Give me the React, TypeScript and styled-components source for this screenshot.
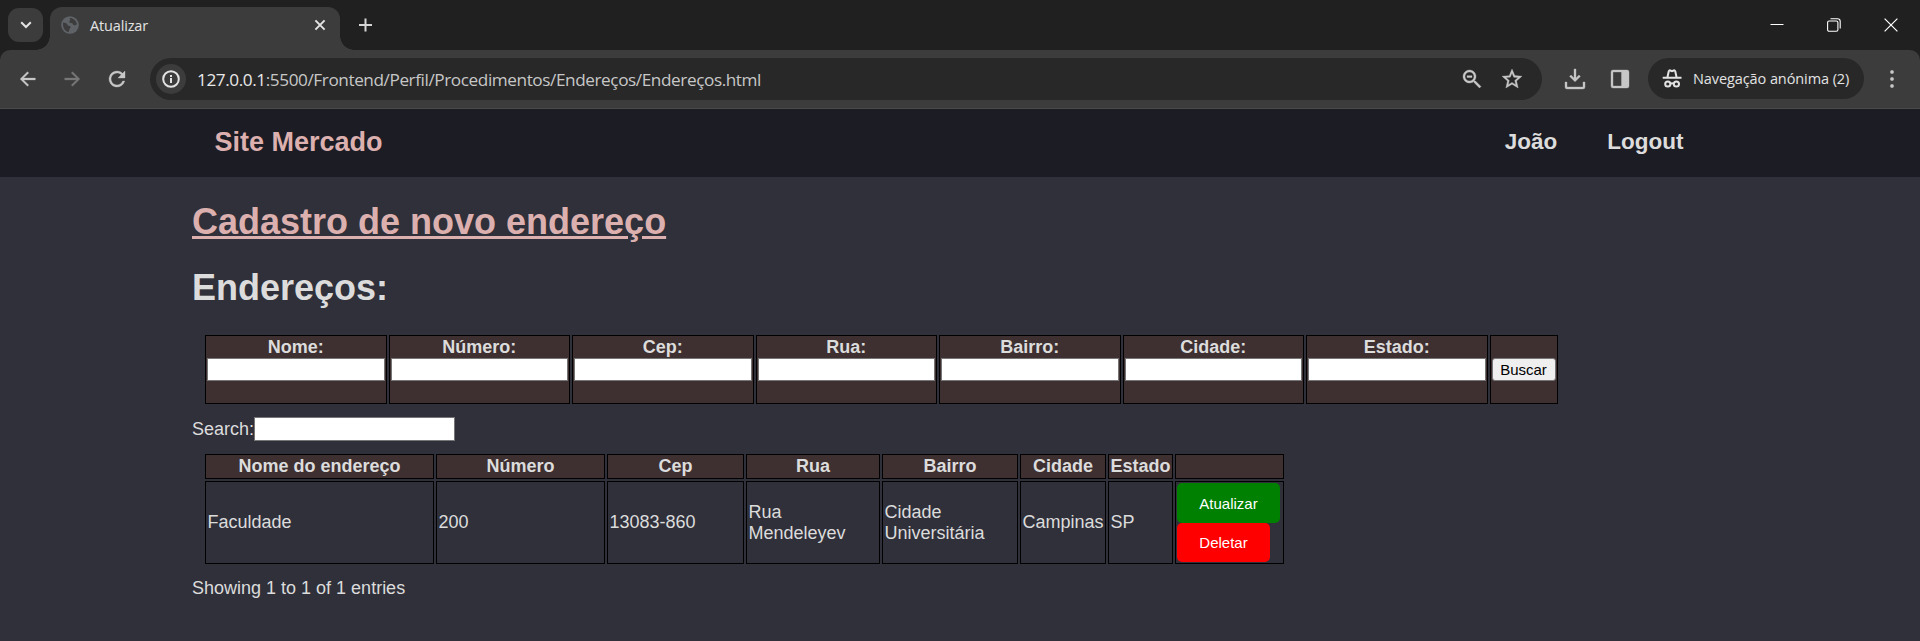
import React from 'react';
import styled, { createGlobalStyle, css } from 'styled-components';

const GlobalStyle = createGlobalStyle`
  * { box-sizing: border-box; }
  body { margin: 0; background: #30303a; overflow: hidden; }
`;

const Window = styled.div`
  width: 1920px;
  height: 641px;
  display: flex;
  flex-direction: column;
  background: #30303a;
  color: #dcdcdc;
  font: 18px/20px "Liberation Sans", Arial, sans-serif;
`;

const TabStrip = styled.div`
  height: 50px;
  flex: none;
  display: flex;
  align-items: center;
  background: #202020;
  padding-left: 8px;
`;

const TabSearch = styled.button`
  width: 35px;
  height: 34px;
  border: 0;
  padding: 0;
  border-radius: 11px;
  background: #3c3c3c;
  display: grid;
  place-items: center;
`;

const Tab = styled.div`
  position: relative;
  width: 290px;
  height: 43px;
  margin: 7px 0 0 7px;
  padding: 0 10px 7px 11px;
  border-radius: 12px 12px 0 0;
  background: #3c3c3c;
  display: flex;
  align-items: center;
  &::before, &::after {
    content: '';
    position: absolute;
    bottom: 0;
    width: 14px;
    height: 14px;
  }
  &::before { right: 100%; background: radial-gradient(circle at 0 0, transparent 13.5px, #3c3c3c 14px); }
  &::after { left: 100%; background: radial-gradient(circle at 100% 0, transparent 13.5px, #3c3c3c 14px); }
`;

const TabTitle = styled.span`
  flex: 1;
  margin-left: 11px;
  padding-top: 1px;
  color: #e3e3e3;
  font: 14.5px/20px "Open Sans", "Noto Sans", sans-serif;
  letter-spacing: -0.15px;
`;

const NewTab = styled.div`
  margin-left: 18px;
  display: flex;
`;

const WindowControls = styled.div`
  margin-left: auto;
  display: flex;
  gap: 43px;
  padding-right: 22px;
`;

const ToolbarBackdrop = styled.div`
  flex: none;
  background: #202020;
`;

const Toolbar = styled.div`
  height: 59px;
  padding-bottom: 1px;
  border-bottom: 1px solid #4a4a4a;
  border-radius: 10px 10px 0 0;
  background: #3c3c3c;
  display: flex;
  align-items: center;
`;

const NavIcons = styled.div`
  width: 150px;
  display: flex;
  align-items: center;
  gap: 22px;
  padding-left: 16.5px;
`;

const AddressBar = styled.div`
  width: 1392px;
  height: 42px;
  padding: 0 18px 0 6px;
  border-radius: 21px;
  background: #282828;
  display: flex;
  align-items: center;
`;

const SiteInfo = styled.div`
  width: 30px;
  height: 30px;
  border-radius: 50%;
  background: #3c3c3c;
  display: grid;
  place-items: center;
`;

const Url = styled.span`
  flex: 1;
  margin-left: 11px;
  padding-top: 2px;
  color: #c7c7c7;
  font: 17.2px/24px "Open Sans", "Noto Sans", sans-serif;
  letter-spacing: -0.42px;
  b { font-weight: 400; color: #e8e8e8; }
`;

const AddressActions = styled.div`
  display: flex;
  gap: 16px;
`;

const ToolbarActions = styled.div`
  display: flex;
  gap: 21px;
  margin: 0 16px 0 21px;
`;

const IncognitoChip = styled.div`
  width: 216px;
  height: 41px;
  padding-left: 12px;
  border-radius: 21px;
  background: #282828;
  display: flex;
  align-items: center;
  gap: 9px;
  color: #e3e3e3;
  font: 14.5px/20px "Open Sans", "Noto Sans", sans-serif;
  letter-spacing: -0.09px;
  white-space: nowrap;
`;

const MenuDots = styled.div`
  margin-left: 16px;
  display: flex;
`;

const SiteHeader = styled.header`
  height: 68px;
  flex: none;
  padding: 0 236.5px 0 214.5px;
  background: #1c1c24;
  display: flex;
  align-items: center;
  justify-content: space-between;
  font-weight: 700;
`;

const Brand = styled.div`
  color: #dcb0ae;
  font-size: 27px;
  line-height: 32px;
  padding-bottom: 3px;
`;

const SiteNav = styled.nav`
  display: flex;
  gap: 50px;
  font-size: 22.5px;
  line-height: 26px;
  padding-bottom: 2px;
`;

const Page = styled.main`
  padding: 24px 192px 0;
`;

const Heading = styled.h1<{ $link?: boolean }>`
  margin: 0 0 24px;
  font-size: 36px;
  line-height: 42px;
  ${p => p.$link && css`color: #dcb0ae; text-decoration: underline;`}
`;

const Cell = styled.div<{ $head?: boolean; $actions?: boolean }>`
  border: 1px solid #000;
  padding: 1px 1px 1px ${p => (p.$actions ? '1px' : '1.5px')};
  display: flex;
  flex-direction: column;
  justify-content: center;
  ${p => p.$head && css`padding: 1px; background: #3e3031; font-weight: 700; text-align: center;`}
`;

const SearchTable = styled.div`
  display: grid;
  grid-template-columns: repeat(7, 181.5px) 68px;
  gap: 2px;
  height: 69px;
  margin: 26px 0 0 13px;
  ${Cell} { justify-content: flex-start; }
`;

const FieldLabel = styled.label`
  height: 21px;
  line-height: 20px;
`;

const Field = styled.input<{ $width?: string }>`
  width: ${p => p.$width || '100%'};
  height: ${p => p.$width ? '24px' : '23px'};
  border: 1px solid #767676;
  background: #fff;
  padding: 0 2px;
`;

const SubmitButton = styled.button`
  height: 23px;
  border: 1px solid #767676;
  border-radius: 3px;
  background: #efefef;
  color: #000;
  padding: 0;
  font: 15px/17px "Liberation Sans", Arial, sans-serif;
`;

const SearchRow = styled.div`
  display: flex;
  align-items: center;
  height: 24px;
  margin: 13px 0;
`;

const ResultTable = styled.div`
  display: grid;
  grid-template-columns: 229px 169px 137px 134px 136px 86px 65px 109px;
  grid-template-rows: 25px 83px;
  gap: 2px;
  margin-left: 13px;
  line-height: 21px;
`;

const ActionButton = styled.button<{ $color: string; $width: number; $height: number }>`
  width: ${p => p.$width}px;
  height: ${p => p.$height}px;
  flex: none;
  border: 0;
  border-radius: 5px;
  background: ${p => p.$color};
  color: #fff;
  padding: 0;
  font: 15px/17px "Liberation Sans", Arial, sans-serif;
`;

const Summary = styled.div`
  margin-top: 14px;
`;

interface IconProps { size?: number; color?: string; children: React.ReactNode; }
const Icon = ({ size = 24, color = '#c7c7c7', children }: IconProps) => (
  <svg width={size} height={size} viewBox="0 0 24 24" fill={color} stroke={color} strokeWidth=".35">{children}</svg>
);

const fields = ['Nome:', 'Número:', 'Cep:', 'Rua:', 'Bairro:', 'Cidade:', 'Estado:'];
const columns = ['Nome do endereço', 'Número', 'Cep', 'Rua', 'Bairro', 'Cidade', 'Estado', ''];
const address = ['Faculdade', '200', '13083-860', 'Rua Mendeleyev', 'Cidade Universitária', 'Campinas', 'SP'];

export default function App() {
  return (
    <Window>
      <GlobalStyle />
      <TabStrip>
        <TabSearch>
          <svg width="12" height="8" viewBox="0 0 12 8" fill="none" stroke="#e3e3e3" strokeWidth="2"><path d="M1.2 1.2 6 6l4.8-4.8" /></svg>
        </TabSearch>
        <Tab>
          <svg width="18" height="18" viewBox="0 0 18 18">
            <circle cx="9" cy="9" r="8.8" fill="#5f6368" />
            <path d="M2 6.5c1 .2 3 .3 4 1.2s0 1.8 1.5 2 2.5 .4 2 1.8-1.5 1.5-1.5 4.5C4 15.5 1.7 12.5 2 6.5zM8.500 2c3-.4 6.5 2 7.4 6-.8 1.5-1.9 1.5-3.4 1-1-.5-.6-1.7-2-1.9S8 7 8.300 5.600 10 4.500 8.500 2z" fill="#3c3c3c" />
          </svg>
          <TabTitle>Atualizar</TabTitle>
          <svg width="20" height="20" viewBox="0 0 20 20" stroke="#e3e3e3" strokeWidth="2"><path d="m5.4 5.4 9.2 9.2m0-9.2-9.2 9.2" /></svg>
        </Tab>
        <NewTab>
          <svg width="15" height="14" viewBox="0 0 15 14" stroke="#d5d5d5" strokeWidth="2"><path d="M1 7h13M7.5 .5v13" /></svg>
        </NewTab>
        <WindowControls>
          <svg width="14" height="14" viewBox="0 0 14 14" stroke="#fff"><path d="M.5 6.5h13" /></svg>
          <svg width="14" height="14" viewBox="0 0 14 14" fill="none" stroke="#fff" strokeWidth="1.1"><rect x=".6" y="3" width="10.3" height="10.3" rx="1.5" /><path d="M3.5.8h7q2.7 0 2.7 2.7v7" /></svg>
          <svg width="14" height="14" viewBox="0 0 14 14" stroke="#fff" strokeWidth="1.2"><path d="m.6.6 12.800 12.800m0-12.800L.6 13.400" /></svg>
        </WindowControls>
      </TabStrip>
      <ToolbarBackdrop>
        <Toolbar>
          <NavIcons>
            <Icon size={22}><path d="M20 11H7.200l5.600-5.600L11.400 4l-8 8 8 8 1.400-1.400L7.200 13H20z" /></Icon>
            <Icon size={22} color="#777"><path d="M4 11h12.800l-5.600-5.600L12.600 4l8 8-8 8-1.400-1.400 5.600-5.600H4z" /></Icon>
            <Icon><path d="M17.650 6.350A7.950 7.950 0 0 0 12 4a8 8 0 1 0 7.730 10h-2.080A6 6 0 1 1 12 6c1.660 0 3.140.69 4.220 1.780L13 11h7V4z" /></Icon>
          </NavIcons>
          <AddressBar>
            <SiteInfo>
              <svg width="18" height="18" viewBox="0 0 18 18" fill="none" stroke="#e3e3e3" strokeWidth="2"><circle cx="9" cy="9" r="7.8" /><path d="M9 8v5M9 5v2" /></svg>
            </SiteInfo>
            <Url><b>127.0.0.1</b>:5500/Frontend/Perfil/Procedimentos/Endereços/Endereços.html</Url>
            <AddressActions>
              <Icon><path d="M15.500 14h-.79l-.28-.27A6.500 6.500 0 1 0 13.730 14.430l.27.28v.79l5.500 5.500 1.500-1.500zm-6 0a4.500 4.500 0 1 1 0-9 4.500 4.500 0 0 1 0 9zM7 8.700h5v1.700H7z" /></Icon>
              <Icon><path d="m22 9.240-7.190-.62L12 2 9.190 8.630 2 9.240l5.460 4.730L5.820 21 12 17.270 18.180 21l-1.630-7.030zM12 15.400l-3.760 2.270 1-4.280-3.320-2.880 4.380-.38L12 6.100l1.710 4.040 4.380.38-3.320 2.880 1 4.280z" /></Icon>
            </AddressActions>
          </AddressBar>
          <ToolbarActions>
            <Icon><path d="M11 2h2v9l3-3 1.400 1.400L12 14.800 6.600 9.400 8 8l3 3zM2 15h2v5h16v-5h2v5q0 2-2 2H4q-2 0-2-2z" /></Icon>
            <Icon><path d="M5 3h14q2 0 2 2v14q0 2-2 2H5q-2 0-2-2V5q0-2 2-2zm0 2v14h8.500V5z" fillRule="evenodd" /></Icon>
          </ToolbarActions>
          <IncognitoChip>
            <svg width="24" height="24" viewBox="0 0 24 24" fill="none" stroke="#e3e3e3" strokeWidth="2">
              <path d="M7.400 10.500 8.700 4.500Q9 3 10.300 3.500L12 4.200l1.700-.7q1.300-.5 1.600 1l1.300 6M2.700 10.800h18.800" />
              <circle cx="7.8" cy="17" r="2.6" /><circle cx="16.4" cy="17" r="2.6" /><path d="M10.400 16.700q1.700-.9 3.400 0" />
            </svg>
            Navegação anónima (2)
          </IncognitoChip>
          <MenuDots><Icon><circle cx="12" cy="5" r="1.7" /><circle cx="12" cy="12" r="1.7" /><circle cx="12" cy="19" r="1.7" /></Icon></MenuDots>
        </Toolbar>
      </ToolbarBackdrop>
      <SiteHeader>
        <Brand>Site Mercado</Brand>
        <SiteNav><span>João</span><span>Logout</span></SiteNav>
      </SiteHeader>
      <Page>
        <Heading $link>Cadastro de novo endereço</Heading>
        <Heading>Endereços:</Heading>
        <SearchTable>
          {fields.map(name => (
            <Cell $head key={name}><FieldLabel>{name}</FieldLabel><Field /></Cell>
          ))}
          <Cell $head><FieldLabel /><SubmitButton>Buscar</SubmitButton></Cell>
        </SearchTable>
        <SearchRow>Search:<Field $width="201px" /></SearchRow>
        <ResultTable>
          {columns.map(name => <Cell $head key={name}>{name}</Cell>)}
          {address.map(value => <Cell key={value}>{value}</Cell>)}
          <Cell $actions>
            <ActionButton $color="#008000" $width={103} $height={40}>Atualizar</ActionButton>
            <ActionButton $color="#ff0000" $width={93} $height={39}>Deletar</ActionButton>
          </Cell>
        </ResultTable>
        <Summary>Showing 1 to 1 of 1 entries</Summary>
      </Page>
    </Window>
  );
}
